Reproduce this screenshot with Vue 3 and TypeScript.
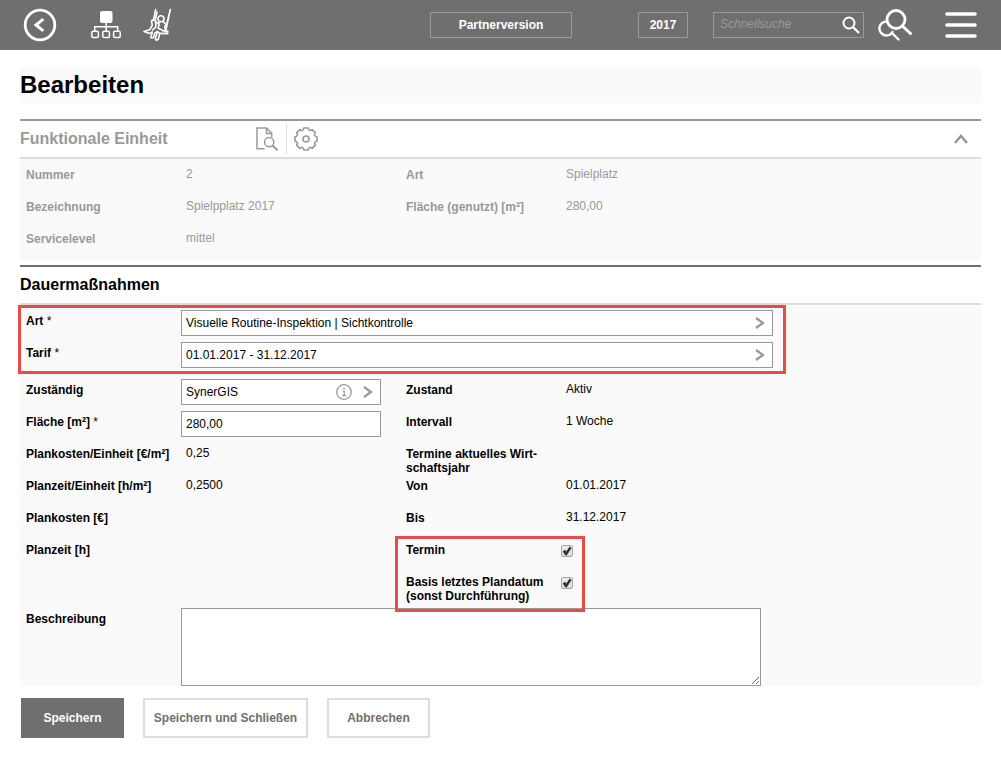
<script setup lang="ts">
import { ref } from 'vue'

interface Fact {
  label: string
  value: string
}

const unitLeft: Fact[] = [
  { label: 'Nummer', value: '2' },
  { label: 'Bezeichnung', value: 'Spielpplatz 2017' },
  { label: 'Servicelevel', value: 'mittel' },
]
const unitRight: Fact[] = [
  { label: 'Art', value: 'Spielplatz' },
  { label: 'Fläche (genutzt) [m²]', value: '280,00' },
]
const planLeft: Fact[] = [
  { label: 'Plankosten/Einheit [€/m²]', value: '0,25' },
  { label: 'Planzeit/Einheit [h/m²]', value: '0,2500' },
  { label: 'Plankosten [€]', value: '' },
  { label: 'Planzeit [h]', value: '' },
]
const planRight: Fact[] = [
  { label: 'Zustand', value: 'Aktiv' },
  { label: 'Intervall', value: '1 Woche' },
  { label: 'Termine aktuelles Wirt-\nschaftsjahr', value: '' },
  { label: 'Von', value: '01.01.2017' },
  { label: 'Bis', value: '31.12.2017' },
]

const art = ref('Visuelle Routine-Inspektion | Sichtkontrolle')
const tarif = ref('01.01.2017 - 31.12.2017')
const responsible = ref('SynerGIS')
const area = ref('280,00')
const termin = ref(true)
const basis = ref(true)
const description = ref('')
const query = ref('')
</script>

<template>
  <div class="page">
    <header class="topbar">
      <nav class="nav" aria-label="Navigation">
        <button type="button" class="icon-btn back" aria-label="Zurück">
          <svg width="34" height="34" viewBox="0 0 34 34" fill="none" stroke="#fff">
            <circle cx="17" cy="17" r="14.8" stroke-width="2.8" />
            <path d="M20.3 11.2 13 17l7.3 5.8" stroke-width="3" />
          </svg>
        </button>
        <button type="button" class="icon-btn tree" aria-label="Struktur">
          <svg width="30" height="28" viewBox="0 0 30 28" fill="none" stroke="#fff" stroke-width="1.5">
            <rect x="9" y="0" width="12.5" height="12" rx="2" fill="#fff" stroke="none" />
            <path d="M15.2 12v8M3.7 20v-4.2h23V20" />
            <rect x="0.8" y="20.2" width="6.6" height="6.2" rx="1.5" />
            <rect x="11.8" y="20.2" width="6.6" height="6.2" rx="1.5" />
            <rect x="22.6" y="20.2" width="6.6" height="6.2" rx="1.5" />
          </svg>
        </button>
        <button type="button" class="icon-btn" aria-label="Spielplatz">
          <svg width="30" height="34" viewBox="0 0 30 34" fill="none" stroke="#fff" stroke-width="1.6" stroke-linecap="round" stroke-linejoin="round">
            <path d="M12.700 1.500 10.300 12.500M14 4l-1.800 8.500M27.300 1.500 22.500 24M26.600 4.500 24 15" />
            <circle cx="18" cy="10.700" r="3" />
            <path d="M8.500 13c1-1.700 3.500-1.200 4.200.5l2.800 2.300 1.500-2.300M8.500 13l.8 4.500-2.800 4.300L.9 23.400l5.800 2 2.600-1.400" />
            <path d="M12.500 14.500l.5 4.300-3.500 3.200M20 13.700l3.300 2.800-1.600 1.700.8 4.300M16 16.500l-.8 3.800 3.300 1.500" />
            <path d="M9.200 24.400l-1.500 5.200 2.600.2 1.700-5 2.300-.8-2 6.400.8 1.800 2.100-.6 1.500-6.200-2.400-2" />
            <path d="M16.700 25.400l7.800.2.300-2.200-5.300-.8" />
          </svg>
        </button>
      </nav>
      <div class="tools">
        <button type="button" class="outline partner">Partnerversion</button>
        <button type="button" class="outline year">2017</button>
        <form class="search" role="search" @submit.prevent>
          <input v-model="query" type="search" aria-label="Schnellsuche" placeholder="Schnellsuche" />
          <button type="submit" class="icon-btn" aria-label="Suchen">
            <svg width="18" height="18" viewBox="0 0 18 18" fill="none" stroke="#fff">
              <circle cx="7" cy="7" r="5.5" stroke-width="2" />
              <path d="M11 11l6 6" stroke-width="2.4" />
            </svg>
          </button>
        </form>
        <button type="button" class="icon-btn double" aria-label="Erweiterte Suche">
          <svg width="34" height="34" viewBox="0 0 34 34" fill="none" stroke="#fff" stroke-linecap="round">
            <path d="M7 13.600A7 7 0 1 0 14.500 24M15 26l5.500 5.500" stroke-width="2.4" />
            <circle cx="18" cy="11.500" r="9" stroke-width="2.8" />
            <path d="M25 18.500l7.500 7" stroke-width="3" />
          </svg>
        </button>
        <button type="button" class="icon-btn" aria-label="Menü">
          <svg width="32" height="26" viewBox="0 0 32 26" stroke="#fff" stroke-width="3.6" stroke-linecap="round">
            <path d="M2 2h28M2 13h28M2 24h28" />
          </svg>
        </button>
      </div>
    </header>

    <main class="content">
      <h1>Bearbeiten</h1>

      <section class="panel muted">
        <div class="panel-head">
          <h2>Funktionale Einheit</h2>
          <div class="head-tools">
            <button type="button" class="icon-btn" aria-label="Details anzeigen">
              <svg width="23" height="24" viewBox="0 0 23 24" fill="none" stroke="#999" stroke-width="1.5">
                <path d="M8.5 21.8H1V1h9.5l5.2 5.2V10M10.5 1v5.4h5.2" />
                <circle cx="13.2" cy="15.2" r="4.6" />
                <path d="M16.6 18.6l5 4.6" stroke-width="2" />
              </svg>
            </button>
            <button type="button" class="icon-btn gear" aria-label="Einstellungen">
              <svg width="24" height="24" viewBox="0 0 24 24" fill="none" stroke="#999" stroke-width="1.6" stroke-linejoin="round">
                <circle cx="12" cy="12" r="3" />
                <path d="M9.700 1H14.300Q14.900 5 18.100 2.600L21.400 5.900Q19 9.100 23 9.700V14.300Q19 14.900 21.400 18.100L18.100 21.400Q14.900 19 14.300 23H9.700Q9.100 19 5.900 21.400L2.600 18.100Q5 14.900 1 14.300V9.700Q5 9.100 2.600 5.900L5.900 2.600Q9.100 5 9.700 1z" />
              </svg>
            </button>
          </div>
          <button type="button" class="icon-btn collapse" aria-label="Einklappen">
            <svg width="14" height="10" viewBox="0 0 14 10" fill="none" stroke="#999" stroke-width="2.6">
              <path d="M1 9l6-7 6 7" />
            </svg>
          </button>
        </div>
        <div class="panel-body columns">
          <dl class="left">
            <div v-for="f in unitLeft" :key="f.label" class="row">
              <dt class="label">{{ f.label }}</dt>
              <dd class="value">{{ f.value }}</dd>
            </div>
          </dl>
          <dl class="right">
            <div v-for="f in unitRight" :key="f.label" class="row">
              <dt class="label">{{ f.label }}</dt>
              <dd class="value">{{ f.value }}</dd>
            </div>
          </dl>
        </div>
      </section>

      <form class="panel" @submit.prevent>
        <div class="panel-head">
          <h2>Dauermaßnahmen</h2>
        </div>
        <div class="panel-body marked wide">
          <div class="row">
            <label class="label" for="art">Art <span class="star">*</span></label>
            <div class="field">
              <input id="art" v-model="art" type="text" />
              <button type="button" class="icon-btn" aria-label="Art auswählen">
                <svg width="10" height="12" viewBox="0 0 10 12" fill="none" stroke="#999" stroke-width="2.2"><path d="M1 1l7 5-7 5" /></svg>
              </button>
            </div>
          </div>
          <div class="row">
            <label class="label" for="tarif">Tarif <span class="star">*</span></label>
            <div class="field">
              <input id="tarif" v-model="tarif" type="text" />
              <button type="button" class="icon-btn" aria-label="Tarif auswählen">
                <svg width="10" height="12" viewBox="0 0 10 12" fill="none" stroke="#999" stroke-width="2.2"><path d="M1 1l7 5-7 5" /></svg>
              </button>
            </div>
          </div>
        </div>
        <div class="panel-body columns">
          <div class="left">
            <div class="row">
              <label class="label" for="responsible">Zuständig</label>
              <div class="field">
                <input id="responsible" v-model="responsible" type="text" />
                <button type="button" class="icon-btn" aria-label="Information">
                  <svg width="16" height="16" viewBox="0 0 16 16" fill="none" stroke="#999">
                    <circle cx="8" cy="8" r="7.3" stroke-width="1.3" />
                    <path d="M6.5 7h1.7v4.5M6.2 11.7h4" stroke-width="1.2" />
                    <circle cx="8" cy="4.5" r="0.9" fill="#999" stroke="none" />
                  </svg>
                </button>
                <button type="button" class="icon-btn" aria-label="Zuständig auswählen">
                  <svg width="10" height="12" viewBox="0 0 10 12" fill="none" stroke="#999" stroke-width="2.2"><path d="M1 1l7 5-7 5" /></svg>
                </button>
              </div>
            </div>
            <div class="row">
              <label class="label" for="area">Fläche [m²] <span class="star">*</span></label>
              <div class="field"><input id="area" v-model="area" type="text" /></div>
            </div>
            <dl>
              <div v-for="f in planLeft" :key="f.label" class="row">
                <dt class="label">{{ f.label }}</dt>
                <dd class="value">{{ f.value }}</dd>
              </div>
            </dl>
          </div>
          <div class="right">
            <dl>
              <div v-for="f in planRight" :key="f.label" class="row">
                <dt class="label">{{ f.label }}</dt>
                <dd class="value">{{ f.value }}</dd>
              </div>
            </dl>
            <div class="marked checks">
              <div class="row">
                <label class="label" for="termin">Termin</label>
                <input id="termin" v-model="termin" type="checkbox" />
              </div>
              <div class="row">
                <label class="label" for="basis">Basis letztes Plandatum<br />(sonst Durchführung)</label>
                <input id="basis" v-model="basis" type="checkbox" />
              </div>
            </div>
          </div>
        </div>
        <div class="panel-body notes">
          <div class="row">
            <label class="label" for="description">Beschreibung</label>
            <textarea id="description" v-model="description"></textarea>
          </div>
        </div>
        <div class="actions">
          <button type="submit" class="action primary">Speichern</button>
          <button type="button" class="action wide-action">Speichern und Schließen</button>
          <button type="button" class="action">Abbrechen</button>
        </div>
      </form>
    </main>
  </div>
</template>

<style>
body {
  margin: 0;
  background: #fff;
}
</style>

<style scoped>
*,
*::after {
  box-sizing: border-box;
}
.page {
  font: 12px/14px "Liberation Sans", Arial, sans-serif;
  color: #000;
}
button,
input,
textarea {
  font: inherit;
  color: inherit;
}
button {
  cursor: pointer;
}
h1,
h2,
dl,
dd {
  margin: 0;
}
.icon-btn {
  display: flex;
  flex: none;
  padding: 0;
  border: 0;
  background: none;
}
.topbar {
  display: flex;
  align-items: center;
  justify-content: space-between;
  height: 50px;
  padding: 0 24px 0 23px;
  background: #6f6f6f;
}
.nav,
.tools {
  display: flex;
  align-items: center;
}
.back {
  margin-right: 34px;
}
.tree {
  margin-right: 22px;
}
.outline {
  height: 26px;
  padding: 0;
  border: 1px solid #999;
  background: none;
  color: #fff;
  font-weight: 700;
}
.partner {
  width: 142px;
  margin-right: 66px;
}
.year {
  width: 50px;
  margin-right: 25px;
}
.search {
  display: flex;
  align-items: center;
  width: 151px;
  height: 26px;
  margin-right: 14px;
  padding: 0 3px 0 6px;
  border: 1px solid #999;
}
.search input {
  flex: 1;
  min-width: 0;
  height: 24px;
  padding: 0 0 2px;
  border: 0;
  outline: 0;
  background: none;
  color: #fff;
  appearance: none;
}
.search input::placeholder {
  color: #999;
  font-style: italic;
}
.double {
  margin-right: 33px;
}
.content {
  padding: 17px 20px;
}
h1 {
  margin-bottom: 16px;
  background: #fafafa;
  font-size: 24px;
  line-height: 36px;
}
.panel {
  border-top: 2px solid #6f6f6f;
}
.panel.muted {
  margin-bottom: 5px;
  border-top-color: #999;
  color: #999;
}
.panel-head {
  display: flex;
  align-items: center;
  height: 38px;
  border-bottom: 2px solid #ddd;
}
h2 {
  font-size: 16px;
  line-height: 36px;
}
.muted h2 {
  width: 236px;
}
.head-tools {
  display: flex;
  align-items: center;
}
.gear {
  align-items: center;
  height: 30px;
  margin-left: 7px;
  padding-left: 7px;
  border-left: 1px solid #ddd;
}
.collapse {
  margin: 0 13px 0 auto;
}
.panel-body {
  padding: 5px 0 0 6px;
  background: #fafafa;
}
.columns {
  display: flex;
}
.left {
  width: 375px;
}
.right {
  padding-left: 5px;
}
.row {
  display: flex;
  align-items: flex-start;
  height: 32px;
}
.label {
  flex: none;
  width: 155px;
  padding-top: 4px;
  font-weight: 700;
  white-space: pre-line;
}
.star {
  font-weight: 400;
}
.value {
  padding: 3px 0 0 5px;
}
.field {
  display: flex;
  align-items: center;
  gap: 11px;
  width: 200px;
  height: 26px;
  padding-right: 7px;
  border: 1px solid #999;
  background: #fff;
}
.wide .field {
  width: 592px;
}
.field input {
  flex: 1;
  min-width: 0;
  height: 24px;
  padding: 0 0 0 4px;
  border: 0;
  outline: 0;
  background: none;
}
.marked {
  position: relative;
}
.marked::after {
  content: "";
  position: absolute;
  z-index: 1;
  border: 3px solid #e94b47;
  pointer-events: none;
}
.wide::after {
  inset: 0 auto 0 -2px;
  width: 768px;
}
.checks::after {
  inset: -3px auto -9px -11px;
  width: 190px;
}
input[type="checkbox"] {
  display: grid;
  width: 12px;
  height: 12px;
  margin: 6px 0 0;
  border: 1px solid #a5a5a5;
  border-radius: 2px;
  background: linear-gradient(#eee, #ddd);
  appearance: none;
}
input[type="checkbox"]:checked::after {
  content: "";
  background: #333;
  clip-path: polygon(8% 55%, 28% 38%, 42% 55%, 76% 4%, 96% 20%, 46% 94%, 34% 94%);
}
.notes .row {
  height: auto;
}
textarea {
  width: 580px;
  height: 78px;
  margin: 0;
  padding: 4px;
  border: 1px solid #999;
  outline: 0;
  background: #fff;
  resize: both;
}
.actions {
  display: flex;
  gap: 19px;
  padding: 12px 1px 0;
}
.action {
  width: 103px;
  height: 40px;
  padding: 0 2px;
  border: 2px solid #ddd;
  background: #fff;
  color: #6f6f6f;
  font-weight: 700;
}
.wide-action {
  width: 165px;
}
.primary {
  border-color: #6f6f6f;
  background: #6f6f6f;
  color: #fff;
}
</style>
